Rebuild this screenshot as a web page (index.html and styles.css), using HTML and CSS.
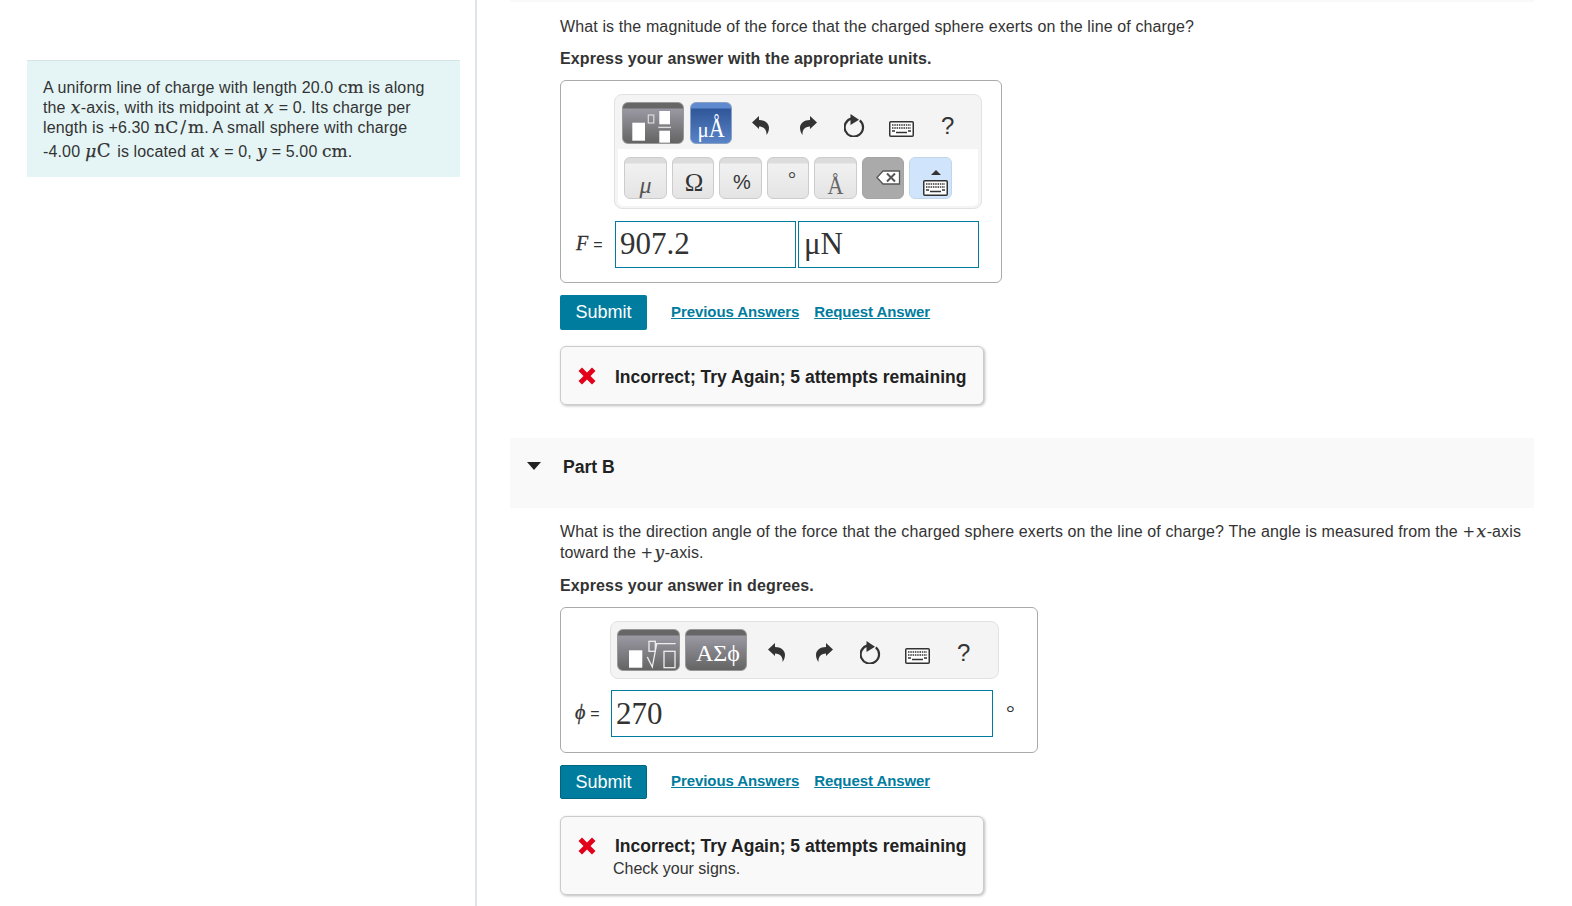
FILE: index.html
```html
<!DOCTYPE html>
<html lang="en">
<head>
<meta charset="utf-8">
<title>Part B</title>
<link rel="stylesheet" href="styles.css">
</head>
<body>
<svg class="defs" width="0" height="0" aria-hidden="true">
  <symbol id="i-undo" viewBox="0 0 17 19"><path d="M0 6.500 7 0v4c6 0 10 3.500 10 8 0 2.500-1 5-2.500 7 .5-4.500-2-8.500-7.500-8.500V13Z"/></symbol>
  <symbol id="i-redo" viewBox="0 0 17 19"><path d="M17 6.500 10 0v4C4 4 0 7.500 0 12c0 2.500 1 5 2.500 7C2 14.500 4.500 10.500 10 10.500V13Z"/></symbol>
  <symbol id="i-reset" viewBox="0 0 21 23"><path d="M15.800 6.300A9.200 9.200 0 1 1 8 4.300" fill="none" stroke="currentColor" stroke-width="2.200"/><path d="M6.500 0 15 5.800 6.500 11Z"/></symbol>
  <symbol id="i-keys" viewBox="0 0 25 16"><rect x=".75" y=".75" width="23.500" height="14.500" rx="1" fill="#fff" stroke="currentColor" stroke-width="1.500"/><path d="M3 4h19M3 7h19" stroke="currentColor" stroke-width="1.600" stroke-dasharray="1.500 .8"/><path d="M3 10h3M19 10h3M7 11.500h11" stroke="currentColor" stroke-width="1.500"/></symbol>
</svg>
<div class="page">
  <aside class="intro">
    <div class="prompt">
      <p>A uniform line of charge with length 20.0 <span class="mu">cm</span> is along<br>
      the <i class="mi">x</i>-axis, with its midpoint at <i class="mi">x</i> = 0. Its charge per<br>
      length is +6.30 <span class="mu">nC<span class="slash">/</span>m</span>. A small sphere with charge<br>
      -4.00 <span class="mu tall"><i class="mi">μ</i>C</span> is located at <i class="mi">x</i> = 0, <i class="mi">y</i> = 5.00 <span class="mu">cm</span>.</p>
    </div>
  </aside>
  <main class="parts">
    <section class="part first">
      <p class="question">What is the magnitude of the force that the charged sphere exerts on the line of charge?</p>
      <p class="hint">Express your answer with the appropriate units.</p>
      <div class="answer answer-a">
        <div class="editor editor-a">
          <div class="tool-row">
            <button class="tpl tpl-a dark"><svg width="60" height="36" viewBox="0 0 60 36"><rect x="9.300" y="15.700" width="12.700" height="18" fill="#fff"/><rect x="25.300" y="8" width="5.500" height="8" fill="none" stroke="#ddd" stroke-width="1.200"/><rect x="36.300" y="4" width="10.700" height="13.300" fill="#fff"/><rect x="35.300" y="19.700" width="12.700" height="1.400" fill="#ddd"/><rect x="36.300" y="23.700" width="10.700" height="12" fill="#fff"/></svg></button>
            <button class="tpl tpl-b blue"><span>μ<span class="stretch">Å</span></span></button>
            <span class="tools tools-a">
              <svg class="ic undo"><use href="#i-undo"/></svg>
              <svg class="ic redo"><use href="#i-redo"/></svg>
              <svg class="ic reset"><use href="#i-reset"/></svg>
              <svg class="ic keys"><use href="#i-keys"/></svg>
              <span class="help">?</span>
            </span>
          </div>
          <div class="key-row">
            <button class="key"><i class="g-mu">μ</i></button>
            <button class="key"><span class="g-om">Ω</span></button>
            <button class="key"><span class="g-pc">%</span></button>
            <button class="key"><span class="g-dg">°</span></button>
            <button class="key"><span class="g-an">Å</span></button>
            <button class="key del"><svg width="25" height="15" viewBox="0 0 25 15"><path d="M7 1h16.500v13H7L1 7.500Z" fill="#fff" stroke="#555" stroke-width="1.300"/><path d="M11 3.500l8 8M19 3.500l-8 8" stroke="#555" stroke-width="2"/></svg></button>
            <button class="key kbd"><svg class="up" width="10" height="5" viewBox="0 0 10 5"><path d="M5 0l5 5H0Z" fill="#333"/></svg><svg class="ic keys"><use href="#i-keys"/></svg></button>
          </div>
        </div>
        <div class="field-row">
          <span class="label"><i class="var">F</i> <span class="eq">=</span></span>
          <span class="field field-a">907.2</span>
          <span class="field field-a unit">μN</span>
        </div>
      </div>
      <div class="actions">
        <button class="submit">Submit</button>
        <a class="link" href="#">Previous Answers</a>
        <a class="link" href="#">Request Answer</a>
      </div>
      <div class="feedback">
        <svg class="cross" width="18" height="18" viewBox="0 0 18 18"><path d="M4 .5 9 5.500 14 .5 17.500 4 12.500 9l5 5L14 17.500l-5-5-5 5L.5 14l5-5-5-5Z" fill="#e2001a"/></svg>
        <div class="fb-text"><strong>Incorrect; Try Again; 5 attempts remaining</strong></div>
      </div>
    </section>
    <header class="part-head">
      <svg class="caret" width="14" height="8" viewBox="0 0 14 8"><path d="M0 0h14L7 8Z" fill="#222"/></svg>
      <h2>Part B</h2>
    </header>
    <section class="part part-b">
      <p class="question">What is the direction angle of the force that the charged sphere exerts on the line of charge? The angle is measured from the <span class="plus">+</span><i class="mi">x</i>-axis<br>toward the <span class="plus">+</span><i class="mi">y</i>-axis.</p>
      <p class="hint">Express your answer in degrees.</p>
      <div class="answer answer-b">
        <div class="editor editor-b">
          <div class="tool-row">
            <button class="tpl tpl-a dark"><svg width="61" height="36" viewBox="0 0 61 36"><rect x="11" y="16.300" width="13.300" height="17.400" fill="#fff"/><rect x="31" y="7.300" width="6.300" height="10" fill="none" stroke="#eee" stroke-width="1.300"/><path d="M29.300 23l5 10 4.400-23.300h19" fill="none" stroke="#eee" stroke-width="1.300"/><rect x="46" y="17.300" width="11" height="16.400" fill="none" stroke="#eee" stroke-width="1.300"/></svg></button>
            <button class="tpl tpl-c dark"><span>ΑΣϕ</span></button>
            <span class="tools tools-b">
              <svg class="ic undo"><use href="#i-undo"/></svg>
              <svg class="ic redo"><use href="#i-redo"/></svg>
              <svg class="ic reset"><use href="#i-reset"/></svg>
              <svg class="ic keys"><use href="#i-keys"/></svg>
              <span class="help">?</span>
            </span>
          </div>
        </div>
        <div class="field-row">
          <span class="label"><i class="var">ϕ</i> <span class="eq">=</span></span>
          <span class="field field-b">270</span>
          <span class="deg">°</span>
        </div>
      </div>
      <div class="actions">
        <button class="submit edge">Submit</button>
        <a class="link" href="#">Previous Answers</a>
        <a class="link" href="#">Request Answer</a>
      </div>
      <div class="feedback">
        <svg class="cross" width="18" height="18" viewBox="0 0 18 18"><path d="M4 .5 9 5.500 14 .5 17.500 4 12.500 9l5 5L14 17.500l-5-5-5 5L.5 14l5-5-5-5Z" fill="#e2001a"/></svg>
        <div class="fb-text"><strong>Incorrect; Try Again; 5 attempts remaining</strong><span class="note">Check your signs.</span></div>
      </div>
    </section>
  </main>
</div>
</body>
</html>
```

FILE: styles.css
```css
* { box-sizing: border-box; }
html, body { margin: 0; height: 100%; overflow: hidden; background: #fff; }
body { font-family: "Liberation Sans", Arial, sans-serif; font-size: 16px; color: #333; }
p { margin: 0; }
button { font: inherit; padding: 0; cursor: pointer; }
.defs { display: block; height: 0; }

.page { display: flex; height: 906px; }
.intro { width: 477px; flex: none; padding: 60px 16px 0 27px; border-right: 2px solid #dfe5ea; }
.prompt { width: 433px; height: 117px; padding: 17px 16px 0; background: #e5f5f6; border-top: 1px solid #d5e4e8; line-height: 20px; letter-spacing: .14px; white-space: nowrap; }

.mi { font-family: "DejaVu Serif", serif; font-size: 17px; font-style: italic; line-height: 0; letter-spacing: 0; padding: 0 .5px; -webkit-text-stroke: .25px currentColor; }
.mu { font-family: "DejaVu Serif", serif; font-size: 17px; line-height: 0; letter-spacing: 0; -webkit-text-stroke: .2px currentColor; }
.mu.tall { font-size: 18px; line-height: 26px; padding-right: 2px; }
.slash { font-family: "DejaVu Sans", sans-serif; font-size: 17.500px; padding: 0 2px; font-weight: normal; line-height: 0; -webkit-text-stroke: 0; }
.plus { font-family: "DejaVu Sans", sans-serif; font-size: 15px; line-height: 0; letter-spacing: 0; margin-right: 1px; }

.parts { flex: 1; padding: 0 38px 0 33px; min-width: 0; }
.part { padding-left: 50px; }
.part.first { padding-top: 15px; border-top: 2px solid #f9f9f9; }
.part-b { padding-top: 14px; }
.question { line-height: 20px; letter-spacing: .12px; white-space: nowrap; }
.part-b .question { line-height: 20.500px; }
.hint { margin-top: 12px; font-weight: bold; line-height: 20px; letter-spacing: .13px; }
.part-b .hint { margin-top: 13px; }

.answer { margin-top: 11px; border: 1px solid #aaa; border-radius: 6px; background: #fff; }
.answer-a { width: 442px; height: 203px; padding: 13px 0 0 53px; }
.answer-b { width: 478px; height: 146px; padding: 13px 0 0 49px; }

.editor { border: 1px solid #e2e2e2; border-radius: 8px; background: #f4f4f4; }
.editor-a { width: 368px; height: 115px; }
.editor-b { width: 389px; height: 58px; }
.tool-row { display: flex; align-items: flex-start; height: 54px; padding: 7px 0 0 7px; }
.editor-b .tool-row { padding: 7px 0 0 6px; }
.tpl { height: 42px; margin-right: 6px; border: 1px solid #aaa; border-radius: 6px; color: #fff; font-family: "Liberation Serif", serif; display: flex; align-items: flex-end; justify-content: center; flex: none; }
.tpl-a { width: 62px; }
.editor-b .tpl-a { width: 63px; margin-right: 5px; }
.tpl-b { width: 42px; font-size: 21px; line-height: 25px; }
.tpl-c { width: 62px; font-size: 24px; line-height: 34px; padding-left: 4px; }
.stretch { display: inline-block; transform: scaleY(1.2); transform-origin: 50% 82%; font-size: 22px; }
.dark { background: linear-gradient(#666 0, #666 5px, #9a98a2 6px, #646464 100%); border-color: #999; }
.blue { background: linear-gradient(#5f8ad0 0, #5f8ad0 5px, #2f5799 6px, #5a84c8 100%); border-color: #8aa0c4; }
.tools { display: flex; align-items: flex-start; height: 42px; color: #333; }
.tools-a { padding-left: 14px; }
.tools-b { padding-left: 15px; }
.ic { fill: currentColor; color: #333; flex: none; }
.undo, .redo { width: 17px; height: 19px; margin-top: 14px; }
.reset { width: 21px; height: 23px; margin-top: 12px; }
.keys { width: 25px; height: 16px; margin-top: 19px; }
.tools .undo { margin-right: 31px; }
.tools .redo { margin-right: 27px; }
.tools .reset { margin-right: 24px; }
.tools .keys { margin-right: 28px; }
.help { font-size: 24px; color: #333; line-height: 1; margin-top: 12px; margin-left: -1px; }

.key-row { display: flex; gap: 5px; height: 57px; padding: 8px 0 0 6px; background: #fff; margin: 0 3px; border-radius: 0 0 5px 5px; }
.key { width: 43px; height: 42px; border: 1px solid #ccc; border-radius: 6px; background: linear-gradient(#dcdcdc 0, #dcdcdc 5px, #f1f1f1 6px, #e4e4e4 100%); display: flex; align-items: flex-end; justify-content: center; color: #333; font-family: "Liberation Serif", serif; flex: none; }
.key:nth-child(even) { width: 42px; }
.g-mu { font-size: 24px; line-height: 25px; color: #555; }
.g-om { font-size: 25px; line-height: 30px; padding-left: 2px; }
.g-pc { font-family: "Liberation Sans", sans-serif; font-size: 20px; line-height: 32px; padding-left: 3px; }
.g-dg { font-size: 20px; height: 36px; line-height: 34px; color: #444; padding-left: 8px; }
.g-an { font-size: 22px; line-height: 22px; color: #666; display: inline-block; transform: scaleY(1.1); transform-origin: 50% 80%; }
.key.del { background: #aaa; border-color: #a4a4a4; align-items: flex-start; padding: 12px 0 0 10px; }
.key.kbd { background: #d0e4fb; border-color: #c2d6ea; flex-direction: column; align-items: center; justify-content: flex-start; padding: 12px 0 0 10px; }
.kbd .keys { margin-top: 5px; }

.field-row { display: flex; align-items: flex-start; margin-top: 12px; margin-left: -40px; }
.answer-b .field-row { margin-top: 11px; margin-left: -36px; }
.label { width: 41px; padding: 10px 0 0 2px; font-family: "Liberation Serif", serif; font-size: 20px; white-space: nowrap; line-height: 24px; }
.answer-b .label { width: 37px; padding-left: 1px; }
.eq { font-family: "Liberation Sans", sans-serif; font-size: 16px; }
.var { font-style: italic; -webkit-text-stroke: .3px currentColor; }
.field { height: 47px; border: 1px solid #007c9e; background: #fff; font-family: "Liberation Serif", serif; font-size: 31px; line-height: 44px; padding-left: 4px; color: #333; display: block; }
.field-a { width: 181px; margin-right: 2px; }
.field-b { width: 382px; line-height: 46px; }
.unit { padding-left: 5px; }
.deg { margin-left: 13px; font-size: 22px; line-height: 46px; font-family: "Liberation Serif", serif; }

.actions { display: flex; align-items: center; margin-top: 12px; }
.submit { width: 87px; height: 35px; background: #007c9e; border: 0; border-radius: 2px; color: #fff; font-size: 18px; margin-right: 24px; }
.submit.edge { height: 34px; border: 1px solid #006680; }
.link { font-size: 15px; font-weight: bold; color: #007c9e; margin: 0 15px 2px 0; letter-spacing: -.08px; }
.part-b .link { margin-bottom: 4px; }

.feedback { display: flex; align-items: flex-start; width: 424px; margin-top: 16px; padding: 20px 16px 17px; background: #f9f9f9; border: 1px solid #ccc; border-radius: 6px; box-shadow: 1px 1px 3px #bbb; }
.part-b .feedback { margin-top: 17px; padding: 19px 16px 14px; }
.part-b .cross { margin-top: 1px; }
.cross { flex: none; margin: 0 19px 0 1px; }
.fb-text { font-size: 17.500px; line-height: 20px; }
.fb-text strong { display: block; color: #222; white-space: nowrap; }
.note { display: block; margin: 2px 0 0 -2px; font-size: 16px; line-height: 22px; color: #333; }

.part-head { display: flex; align-items: flex-start; height: 70px; margin-top: 33px; padding: 20px 0 0 17px; background: #f9f9f9; }
.caret { margin: 4px 22px 0 0; flex: none; }
.part-head h2 { margin: 0; font-size: 17.600px; line-height: 18px; color: #222; }
```
